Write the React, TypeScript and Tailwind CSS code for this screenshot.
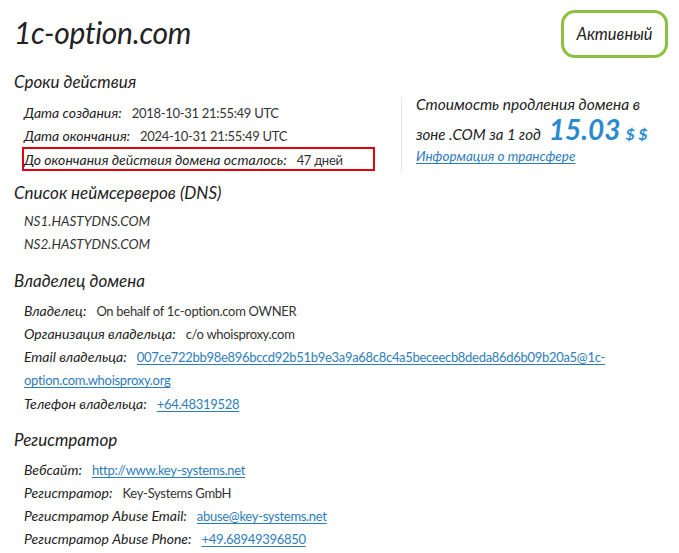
import React from "react";

const Row = ({ label, children }: { label: string; children: React.ReactNode }) => (
  <div className="h-[23px] flex items-baseline pt-[1px] whitespace-nowrap">
    <span className="italic text-[14px] text-[#222]">{label}</span>
    <span className="ml-[10px] text-[13px] tracking-[-0.3px] text-[#333]">{children}</span>
  </div>
);

const A = ({ children }: { children: React.ReactNode }) => (
  <a className="text-[#2e7dbb] underline underline-offset-2">{children}</a>
);

export default function App() {
  return (
    <div className="w-[679px] h-[553px] bg-white overflow-hidden text-[13px] text-[#333]" style={{ fontFamily: "Lato, 'Open Sans', sans-serif" }}>
      <div className="flex justify-between items-start pl-[14px] pr-[11px] pt-[10px]">
        <h1 className="italic text-[30px] text-[#222] mt-[5px] leading-[34px] tracking-[-0.3px]">1c-option.com</h1>
        <div className="border-[3px] border-[#8dc03f] rounded-[14px] w-[107px] h-[48px] flex items-center justify-center italic text-[16.5px] text-[#222]">
          Активный
        </div>
      </div>

      <h2 className="italic text-[17px] text-[#222] pl-[14px] mt-[12px] leading-[24px]">Сроки действия</h2>
      <div className="flex mt-[7px]">
        <div className="pl-[24px] w-[390px]">
          <Row label="Дата создания:">2018-10-31 21:55:49 UTC</Row>
          <Row label="Дата окончания:">2024-10-31 21:55:49 UTC</Row>
          <div className="ml-[-2px] w-[353px] h-[24px] border-[2px] border-[#e3000f] flex items-baseline whitespace-nowrap">
            <span className="italic text-[14px] text-[#222]">До окончания действия домена осталось:</span>
            <span className="ml-[10px] text-[13px] tracking-[-0.3px]">47 дней</span>
          </div>
        </div>
        <div className="ml-[11px] border-l border-[#e5e5e5] pl-[14px] mt-[-4px] h-[75px]">
          <div className="mt-[-5px]">
            <div className="italic text-[15.5px] text-[#222] leading-[24px]">Стоимость продления домена в</div>
            <div className="flex items-baseline italic text-[15px] text-[#222] leading-[26px]">
              зоне .COM за 1 год
              <span className="ml-[8px] text-[28px] font-bold text-[#2a8ad0] italic">15.03</span>
              <span className="ml-[5px] text-[16px] font-bold text-[#2a8ad0]">$ $</span>
            </div>
            <div className="italic text-[13.5px] leading-[18px]"><A>Информация о трансфере</A></div>
          </div>
        </div>
      </div>

      <h2 className="italic text-[17px] text-[#222] pl-[14px] mt-[9px] leading-[24px]">Список неймсерверов (DNS)</h2>
      <div className="pl-[24px] mt-[5px] italic text-[13.5px]">
        <div className="h-[23px] flex items-center">NS1.HASTYDNS.COM</div>
        <div className="h-[23px] flex items-center">NS2.HASTYDNS.COM</div>
      </div>

      <h2 className="italic text-[17px] text-[#222] pl-[14px] mt-[13px] leading-[24px]">Владелец домена</h2>
      <div className="pl-[24px] mt-[6px]">
        <Row label="Владелец:">On behalf of 1c-option.com OWNER</Row>
        <Row label="Организация владельца:">c/o whoisproxy.com</Row>
        <div className="leading-[23px] w-[600px]">
          <span className="italic text-[14px] text-[#222]">Email владельца:</span>
          <span className="ml-[10px] text-[13px] tracking-[-0.3px]"><A>007ce722bb98e896bccd92b51b9e3a9a68c8c4a5beceecb8deda86d6b09b20a5@1c-option.com.whoisproxy.org</A></span>
        </div>
        <Row label="Телефон владельца:"><A>+64.48319528</A></Row>
      </div>

      <h2 className="italic text-[17px] text-[#222] pl-[14px] mt-[13px] leading-[24px]">Регистратор</h2>
      <div className="pl-[24px] mt-[6px]">
        <Row label="Вебсайт:"><A>http://www.key-systems.net</A></Row>
        <Row label="Регистратор:">Key-Systems GmbH</Row>
        <Row label="Регистратор Abuse Email:"><A>abuse@key-systems.net</A></Row>
        <Row label="Регистратор Abuse Phone:"><A>+49.68949396850</A></Row>
      </div>
    </div>
  );
}
